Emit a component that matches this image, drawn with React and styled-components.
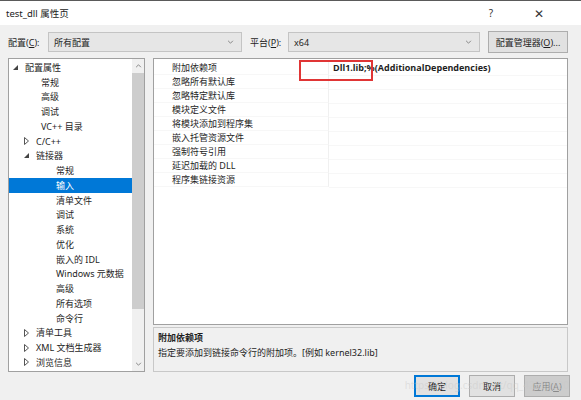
import React from 'react';
import styled, { createGlobalStyle } from 'styled-components';

const GlobalStyle = createGlobalStyle`
  html, body { margin: 0; padding: 0; background: #f0f0f0; }
  body {
    font-family: "Noto Sans", "Noto Sans CJK SC", sans-serif;
    font-size: 9px;
    color: #1e1e1e;
  }
`;

const Window = styled.div`
  position: relative;
  width: 581px;
  height: 400px;
  box-sizing: border-box;
  border-top: 1px solid #5a5a5a;
  background: #f0f0f0;
  display: flex;
  flex-direction: column;
  overflow: hidden;
`;

const TitleBar = styled.div`
  height: 24px;
  background: #ffffff;
  display: flex;
  align-items: center;
  padding: 0 18px 0 6px;
  font-size: 9.5px;
  color: #222;
`;

const TitleText = styled.div`
  flex: 1;
`;

const TitleButton = styled.div`
  width: 48px;
  text-align: center;
  font-size: ${p => (p.big ? '12px' : '10px')};
  color: #333;
`;

const Toolbar = styled.div`
  display: flex;
  align-items: center;
  padding: 6px 13px 0 8px;
  height: 22px;
`;

const Label = styled.span`
  width: ${p => p.w}px;
  flex: none;
  white-space: nowrap;
`;

const Combo = styled.div`
  width: ${p => p.w}px;
  height: 20px;
  flex: none;
  box-sizing: border-box;
  border: 1px solid #c4c4c4;
  background: #e6e6e6;
  display: flex;
  align-items: center;
  padding: 0 7px 0 5px;
  margin-right: ${p => p.mr}px;
`;

const ComboText = styled.span`
  flex: 1;
`;

const Button = styled.div`
  width: ${p => p.w}px;
  height: 22px;
  flex: none;
  box-sizing: border-box;
  display: flex;
  align-items: center;
  justify-content: center;
  white-space: nowrap;
  background: ${p => (p.disabled ? '#cccccc' : '#e1e1e1')};
  border: ${p => (p.focused ? '2px solid #0078d7' : '1px solid #adadad')};
  color: ${p => (p.disabled ? '#8a8a8a' : '#1e1e1e')};
`;

const Main = styled.div`
  display: flex;
  gap: 8px;
  padding: 5px 13px 0 8px;
  height: 314px;
`;

const Tree = styled.div`
  width: 137px;
  flex: none;
  box-sizing: border-box;
  border: 1px solid #a0a0a0;
  background: #ffffff;
  display: flex;
`;

const TreeList = styled.div`
  flex: 1;
  min-width: 0;
  overflow: hidden;
  padding-top: 1px;
`;

const TreeRow = styled.div`
  height: 14.75px;
  display: flex;
  align-items: center;
  padding-left: ${p => p.indent}px;
  background: ${p => (p.selected ? '#0078d7' : 'transparent')};
  color: ${p => (p.selected ? '#ffffff' : '#1e1e1e')};
  white-space: nowrap;
`;

const Toggle = styled.span`
  width: 8px;
  display: inline-flex;
  align-items: center;
  margin-right: 4px;
`;

const ScrollBar = styled.div`
  width: 12px;
  flex: none;
  background: #f0f0f0;
  display: flex;
  flex-direction: column;
  align-items: center;
`;

const ScrollArrow = styled.div`
  height: 14px;
  display: flex;
  align-items: center;
  justify-content: center;
`;

const ScrollThumb = styled.div`
  width: 100%;
  height: 236px;
  background: #cdcdcd;
`;

const ScrollFill = styled.div`
  flex: 1;
`;

const RightCol = styled.div`
  flex: 1;
  display: flex;
  flex-direction: column;
  gap: 2px;
`;

const Grid = styled.div`
  position: relative;
  flex: 1;
  box-sizing: border-box;
  border: 1px solid #a0a0a0;
  background: #ffffff;
  padding-top: 2px;
`;

const GridRow = styled.div`
  display: flex;
  height: 14px;
  align-items: center;
`;

const NameCell = styled.div`
  width: 175px;
  flex: none;
  box-sizing: border-box;
  padding-left: 18px;
  height: 100%;
  display: flex;
  align-items: center;
  border-right: 1px solid #f0f0f0;
  border-bottom: 1px solid #f7f7f7;
  white-space: nowrap;
`;

const ValueCell = styled.div`
  flex: 1;
  height: 100%;
  display: flex;
  align-items: center;
  padding-left: 4px;
  font-weight: bold;
  font-size: 9px;
  font-family: "Open Sans", "Noto Sans CJK SC", sans-serif;
  border-bottom: 1px solid #f7f7f7;
  white-space: nowrap;
`;

const Highlight = styled.div`
  position: absolute;
  left: 145px;
  top: 1px;
  width: 74px;
  height: 21px;
  box-sizing: border-box;
  border: 2px solid #e03535;
`;

const Desc = styled.div`
  height: 45px;
  box-sizing: border-box;
  border: 1px solid #c8c8c8;
  background: #f0f0f0;
  padding: 3px 4px;
  display: flex;
  flex-direction: column;
  gap: 1px;
  line-height: 14px;
`;

const DescTitle = styled.div`
  font-weight: bold;
`;

const Footer = styled.div`
  display: flex;
  justify-content: flex-end;
  gap: 9px;
  padding: 3px 11px 0 0;
`;

const Watermark = styled.div`
  position: absolute;
  right: 12px;
  bottom: 8px;
  color: rgba(200, 200, 200, 0.45);
  font-size: 10px;
  pointer-events: none;
`;

const Chevron = ({ up }) => (
  <svg width="7" height="4" viewBox="0 0 8 5">
    <path d={up ? 'M1 4 L4 1 L7 4' : 'M1 1 L4 4 L7 1'} fill="none" stroke="#707070" strokeWidth="1" />
  </svg>
);

const Expanded = () => (
  <svg width="5" height="5" viewBox="0 0 6 6">
    <path d="M6 0 L6 6 L0 6 Z" fill="#444" />
  </svg>
);

const Collapsed = () => (
  <svg width="5" height="8" viewBox="0 0 5 8">
    <path d="M0.5 0.5 L4.5 4 L0.5 7.5 Z" fill="none" stroke="#555" strokeWidth="1" />
  </svg>
);

const tree = [
  { t: '配置属性', i: 12, s: 'open' },
  { t: '常规', i: 32 },
  { t: '高级', i: 32 },
  { t: '调试', i: 32 },
  { t: 'VC++ 目录', i: 32 },
  { t: 'C/C++', i: 23, s: 'closed' },
  { t: '链接器', i: 23, s: 'open' },
  { t: '常规', i: 47 },
  { t: '输入', i: 47, sel: true },
  { t: '清单文件', i: 47 },
  { t: '调试', i: 47 },
  { t: '系统', i: 47 },
  { t: '优化', i: 47 },
  { t: '嵌入的 IDL', i: 47 },
  { t: 'Windows 元数据', i: 47 },
  { t: '高级', i: 47 },
  { t: '所有选项', i: 47 },
  { t: '命令行', i: 47 },
  { t: '清单工具', i: 23, s: 'closed' },
  { t: 'XML 文档生成器', i: 23, s: 'closed' },
  { t: '浏览信息', i: 23, s: 'closed' },
];

const props = [
  ['附加依赖项', 'Dll1.lib;%(AdditionalDependencies)'],
  ['忽略所有默认库', ''],
  ['忽略特定默认库', ''],
  ['模块定义文件', ''],
  ['将模块添加到程序集', ''],
  ['嵌入托管资源文件', ''],
  ['强制符号引用', ''],
  ['延迟加载的 DLL', ''],
  ['程序集链接资源', ''],
];

export default function App() {
  return (
    <>
      <GlobalStyle />
      <Window>
        <TitleBar>
          <TitleText>test_dll 属性页</TitleText>
          <TitleButton>?</TitleButton>
          <TitleButton big>✕</TitleButton>
        </TitleBar>
        <Toolbar>
          <Label w={40}>配置(<u>C</u>):</Label>
          <Combo w={194} mr={8}>
            <ComboText>所有配置</ComboText>
            <Chevron />
          </Combo>
          <Label w={38}>平台(<u>P</u>):</Label>
          <Combo w={192} mr={8}>
            <ComboText>x64</ComboText>
            <Chevron />
          </Combo>
          <Button w={80}>配置管理器(<u>O</u>)...</Button>
        </Toolbar>
        <Main>
          <Tree>
            <TreeList>
              {tree.map((r, k) => (
                <TreeRow key={k} indent={r.s ? r.i - 8 : r.i} selected={r.sel}>
                  {r.s && <Toggle>{r.s === 'open' ? <Expanded /> : <Collapsed />}</Toggle>}
                  {r.t}
                </TreeRow>
              ))}
            </TreeList>
            <ScrollBar>
              <ScrollArrow><Chevron up /></ScrollArrow>
              <ScrollThumb />
              <ScrollFill />
              <ScrollArrow><Chevron /></ScrollArrow>
            </ScrollBar>
          </Tree>
          <RightCol>
            <Grid>
              {props.map(([n, v], k) => (
                <GridRow key={k}>
                  <NameCell>{n}</NameCell>
                  <ValueCell>{v}</ValueCell>
                </GridRow>
              ))}
              <Highlight />
            </Grid>
            <Desc>
              <DescTitle>附加依赖项</DescTitle>
              <div>指定要添加到链接命令行的附加项。[例如 kernel32.lib]</div>
            </Desc>
          </RightCol>
        </Main>
        <Footer>
          <Button w={46} focused>确定</Button>
          <Button w={46}>取消</Button>
          <Button w={46} disabled>应用(<u>A</u>)</Button>
        </Footer>
        <Watermark>https://blog.csdn.net/qq_42239520</Watermark>
      </Window>
    </>
  );
}
